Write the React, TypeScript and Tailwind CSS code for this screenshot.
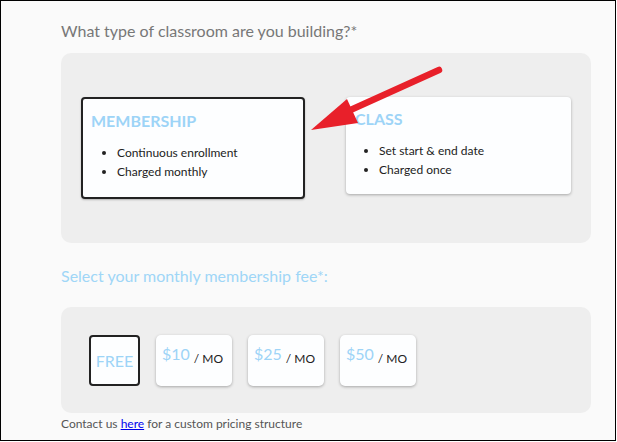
import React from 'react';

const font = { fontFamily: 'Lato, "Noto Sans", sans-serif' };

const prices = ['$10', '$25', '$50'];

const Arrow: React.FC = () => (
  <svg className="absolute left-0 top-0 pointer-events-none" width="617" height="442" viewBox="0 0 617 442">
    <line x1="439" y1="70" x2="335" y2="117" stroke="#e8202a" strokeWidth="6.5" strokeLinecap="round" />
    <polygon points="311,130 347,99 358,123" fill="#e8202a" />
  </svg>
);

const App: React.FC = () => {
  return (
    <div className="relative w-[617px] h-[442px] bg-white" style={font}>
      <div className="w-[616px] h-[441px] border border-black bg-[#fafafa] pl-[60px] pt-[20px]">
        <h2 className="text-[16px] leading-[20px] text-[#777777]">
          What type of classroom are you building?*
        </h2>

        {/* Classroom type */}
        <div className="mt-[12px] w-[530px] h-[190px] rounded-[10px] bg-[#eeeeee] pl-[20px] pt-[44px] flex items-start gap-[41px]">
          <div className="w-[224px] h-[102px] rounded-[4px] border-2 border-[#222222] bg-[#fdfeff] pl-[8px] pt-[12px] shadow-[0_1px_2px_rgba(0,0,0,0.25)]">
            <div className="text-[16px] leading-[20px] font-bold text-[#9dd4f7]">MEMBERSHIP</div>
            <ul className="mt-[12px] list-disc pl-[26px] text-[12px] leading-[19px] text-[#222222]">
              <li>Continuous enrollment</li>
              <li>Charged monthly</li>
            </ul>
          </div>
          <div className="w-[225px] h-[97px] rounded-[4px] bg-[#fdfeff] pl-[9px] pt-[12px] shadow-[0_1px_3px_rgba(0,0,0,0.3)]">
            <div className="text-[16px] leading-[20px] font-bold text-[#9dd4f7]">CLASS</div>
            <ul className="mt-[12px] list-disc pl-[24px] text-[12px] leading-[19px] text-[#222222]">
              <li>Set start &amp; end date</li>
              <li>Charged once</li>
            </ul>
          </div>
        </div>

        <h2 className="mt-[23px] text-[16px] leading-[20px] text-[#9fd6f7]">
          Select your monthly membership fee*:
        </h2>

        {/* Fee options */}
        <div className="mt-[21px] w-[530px] h-[106px] rounded-[10px] bg-[#eeeeee] pl-[28px] pt-[28px] flex items-start gap-[16px]">
          <div className="w-[51px] h-[51px] rounded-[4px] border-2 border-[#222222] bg-[#fdfeff] flex items-center justify-center">
            <span className="text-[16px] text-[#9dd4f7]">FREE</span>
          </div>
          {prices.map((p) => (
            <div key={p} className="w-[76px] h-[51px] rounded-[5px] bg-[#fdfeff] pl-[6px] pt-[9px] flex items-start shadow-[0_1px_3px_rgba(0,0,0,0.3)]">
              <span className="text-[16px] leading-[20px] text-[#9dd4f7]">{p}</span>
              <span className="ml-[4px] mt-[7px] text-[12px] leading-[16px] text-[#222222]">/ MO</span>
            </div>
          ))}
        </div>

        <p className="mt-[3px] text-[12px] leading-[16px] text-[#555555]">
          Contact us <a href="#" className="text-[#0000ee] underline">here</a> for a custom pricing structure
        </p>
      </div>
      <Arrow />
    </div>
  );
};

export default App;
